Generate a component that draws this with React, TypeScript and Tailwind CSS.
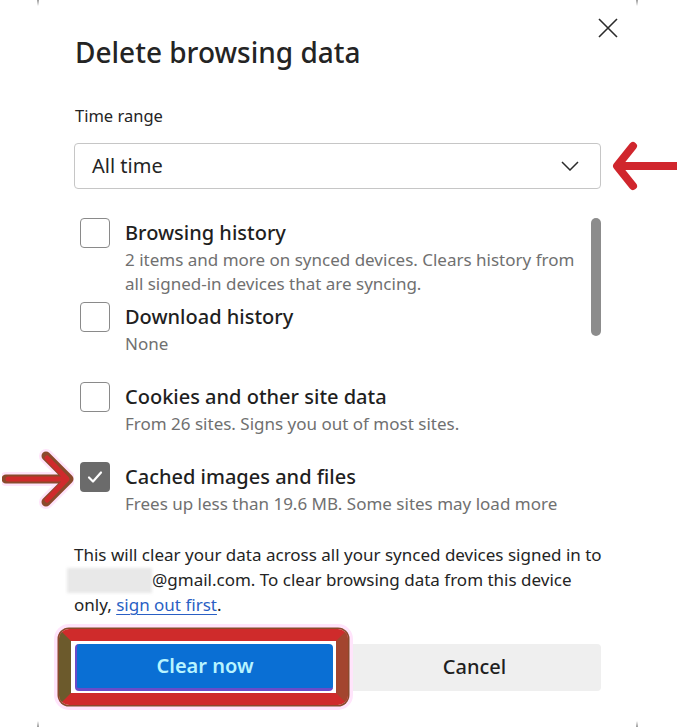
import React from "react";

const font = { fontFamily: '"Noto Sans", "Open Sans", Arial, sans-serif' };

function Checkbox({ checked }: { checked?: boolean }) {
  if (checked) {
    return (
      <div className="w-[30px] h-[30px] shrink-0 rounded-[4px] bg-[#6b6b6b] flex items-center justify-center">
        <svg width="18" height="18" viewBox="0 0 18 18" fill="none">
          <path d="M3 9.5 L7 13.5 L15 4.5" stroke="#ffffff" strokeWidth="2.2" strokeLinecap="round" strokeLinejoin="round" />
        </svg>
      </div>
    );
  }
  return <div className="w-[30px] h-[30px] shrink-0 rounded-[4px] border border-[#8a8a8a] bg-white" />;
}

function Item({ label, sub, checked, last }: { label: string; sub: React.ReactNode; checked?: boolean; last?: boolean }) {
  return (
    <div className={last ? "flex gap-[15px] pl-[6px] pb-[6px]" : "flex gap-[15px] pl-[6px] min-h-[80px] pb-[6px]"}>
      <Checkbox checked={checked} />
      <div className="flex flex-col">
        <div className="text-[20px] leading-[30px] text-[#1f1f1f] font-medium">{label}</div>
        <div className="text-[17px] leading-[24px] text-[#707070] whitespace-nowrap">{sub}</div>
      </div>
    </div>
  );
}

export default function App() {
  return (
    <div className="w-[677px] h-[727px] relative bg-white overflow-hidden" style={font}>
      {/* corner marks of the dialog */}
      <div className="absolute left-[37px] top-0 w-[2px] h-[6px] bg-gradient-to-b from-[#9a9a9a] to-transparent" />
      <div className="absolute left-[636px] top-0 w-[2px] h-[6px] bg-gradient-to-b from-[#9a9a9a] to-transparent" />
      <div className="absolute left-[37px] bottom-0 w-[2px] h-[6px] bg-gradient-to-t from-[#9a9a9a] to-transparent" />
      <div className="absolute left-[636px] bottom-0 w-[2px] h-[6px] bg-gradient-to-t from-[#9a9a9a] to-transparent" />

      <div className="relative w-[527px] ml-[74px] flex flex-col">
        {/* close */}
        <button className="absolute left-[524px] top-[18px] w-[20px] h-[20px]">
          <svg width="20" height="20" viewBox="0 0 20 20" fill="none">
            <path d="M1 1 L19 19 M19 1 L1 19" stroke="#2b2b2b" strokeWidth="1.6" />
          </svg>
        </button>

        <h1 className="pt-[34px] pl-[1px] text-[28px] leading-[36px] font-medium text-[#242424]">Delete browsing data</h1>

        <div className="mt-[35px] pl-[1px] text-[16.5px] leading-[22px] text-[#242424]">Time range</div>

        <div className="relative mt-[16px] h-[46px] rounded-[4px] border border-[#c6c6c6] flex items-center justify-between pl-[17px] pr-[21px]">
          <span className="text-[20px] text-[#242424]">All time</span>
          <svg width="18" height="10" viewBox="0 0 18 10" fill="none">
            <path d="M1 1 L9 9 L17 1" stroke="#2b2b2b" strokeWidth="1.5" />
          </svg>
          {/* annotation arrow */}
          <svg className="absolute left-[536px] top-[-5px]" width="70" height="54" viewBox="0 0 70 54" fill="none">
            <path d="M66 27 L8 27 M22 7 L6 27 L22 47" stroke="#d0262d" strokeWidth="8" strokeLinecap="round" strokeLinejoin="round" />
          </svg>
        </div>

        <div className="mt-[29px] flex">
          <div className="flex-1 flex flex-col">
            <Item
              label="Browsing history"
              sub={
                <>
                  2 items and more on synced devices. Clears history from
                  <br />
                  all signed-in devices that are syncing.
                </>
              }
            />
            <Item label="Download history" sub="None" />
            <Item label="Cookies and other site data" sub="From 26 sites. Signs you out of most sites." />
            <div className="relative">
              <svg className="absolute left-[-72px] top-[-13px]" width="72" height="60" viewBox="0 0 72 60" fill="none">
                <path d="M4 30 L66 30 M44 7 L67 30 L44 53" stroke="#ffd9f8" strokeWidth="14" strokeLinecap="round" strokeLinejoin="round" opacity="0.7" />
                <path d="M4 30 L66 30 M44 7 L67 30 L44 53" stroke="#8a4a2c" strokeWidth="9" strokeLinecap="round" strokeLinejoin="round" />
                <path d="M6 30 L64 30 M45 9 L65 30 L45 51" stroke="#cf2a2c" strokeWidth="5" strokeLinecap="round" strokeLinejoin="round" />
              </svg>
              <Item label="Cached images and files" sub="Frees up less than 19.6 MB. Some sites may load more" checked last />
            </div>
          </div>
          <div className="w-[10px] h-[118px] rounded-full bg-[#8c8c8c]" />
        </div>

        <p className="mt-[21px] text-[17px] leading-[24.5px] text-[#242424] whitespace-nowrap">
          This will clear your data across all your synced devices signed in to
          <br />
          <span className="inline-block align-middle w-[85px] h-[25px] -ml-[7px] bg-[#e8e8e8] blur-[1.5px]" />
          @gmail.com. To clear browsing data from this device
          <br />
          only,{" "}
          <a className="text-[#2a5fc4] underline underline-offset-[3px] decoration-[#2a5fc4]">sign out first</a>.
        </p>

        <div className="mt-[26px] flex gap-[15px] pl-[1px]">
          <div className="relative w-[258px] h-[47px]">
            <div className="absolute -left-[16px] -right-[15px] -top-[15px] -bottom-[14px] rounded-[10px] border-[12px] border-t-[#cf2b2b] border-b-[#cf2b2b] border-l-[#6c5a2c] border-r-[#a3452f] shadow-[0_0_0_1.5px_#8a4a2c,0_0_0_5px_#ffe4fb]" />
            <button className="relative w-full h-full rounded-[4px] bg-[#0a6fd4] border-b-[3px] border-l-[2px] border-[#6a4bc8] text-[20px] font-semibold text-[#b8f4ff]">
              Clear now
            </button>
          </div>
          <button className="w-[253px] h-[47px] rounded-[4px] bg-[#efefef] text-[20px] font-medium text-[#1f1f1f]">
            Cancel
          </button>
        </div>
      </div>
    </div>
  );
}
